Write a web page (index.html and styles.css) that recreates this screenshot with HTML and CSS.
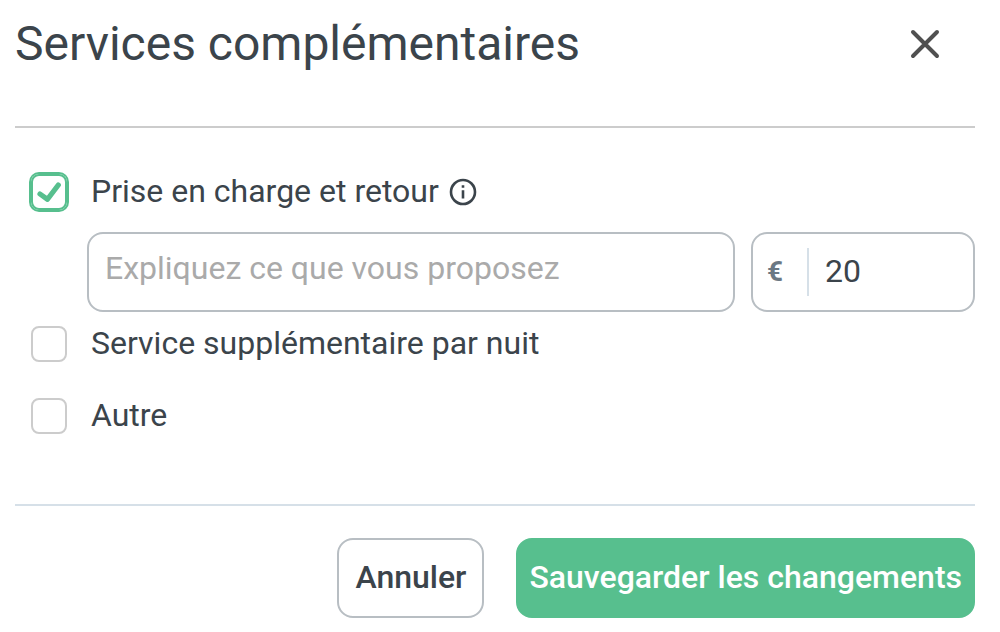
FILE: index.html
```html
<!DOCTYPE html>
<html lang="fr">
<head>
  <meta charset="UTF-8">
  <title>Services complémentaires</title>
  <meta name="viewport" content="width=device-width, initial-scale=1.0">
  <link rel="stylesheet" href="styles.css">
</head>
<body>

  <form class="services">
    <header class="services-header">
      <h1>Services complémentaires</h1>
      <button type="button" class="close" aria-label="Fermer">
        <svg width="32" height="32" viewBox="0 0 32 32" fill="none" stroke="#505050" stroke-width="4" stroke-linecap="round">
          <path d="M4 4L28 28M28 4L4 28"/>
        </svg>
      </button>
    </header>

    <div class="services-list">
      <div class="service">
        <input type="checkbox" id="pickup" checked>
        <label for="pickup">Prise en charge et retour</label>
        <svg class="info" width="28" height="28" viewBox="0 0 28 28">
          <circle cx="14" cy="14" r="12" fill="none" stroke="#3b444b" stroke-width="2.6"/>
          <path d="M12.7 7.2h2.6v2.5h-2.6zM12.7 12.2h2.6v8.4h-2.6z" fill="#3b444b"/>
        </svg>
      </div>

      <div class="service-details">
        <input type="text" class="description" placeholder="Expliquez ce que vous proposez" aria-label="Description du service">
        <div class="price">
          <label for="pickup-price">€</label>
          <input type="text" id="pickup-price" inputmode="numeric" value="20">
        </div>
      </div>

      <div class="service">
        <input type="checkbox" id="night">
        <label for="night">Service supplémentaire par nuit</label>
      </div>

      <div class="service">
        <input type="checkbox" id="other">
        <label for="other">Autre</label>
      </div>
    </div>

    <footer class="services-footer">
      <button type="button" class="btn">Annuler</button>
      <button type="submit" class="btn btn-primary">Sauvegarder les changements</button>
    </footer>
  </form>

</body>
</html>
```
FILE: styles.css
```css
* {
  box-sizing: border-box;
}

body {
  margin: 0;
  font-family: Roboto, "Liberation Sans", sans-serif;
  font-size: 32px;
  line-height: 40px;
  color: #3b444b;
  background: #fff;
}

input,
button {
  font: inherit;
  color: inherit;
}

.services {
  padding: 16px 25px 14px 15px;
}

.services-header {
  display: flex;
  justify-content: space-between;
  align-items: center;
  padding: 0 34px 54px 0;
  border-bottom: 2px solid #ccc;
}

h1 {
  margin: 0;
  font-size: 48px;
  line-height: 56px;
  font-weight: 400;
}

.close {
  display: flex;
  padding: 0;
  border: none;
  background: none;
  cursor: pointer;
}

.services-list {
  padding: 44px 0 68px;
}

.service {
  display: flex;
  align-items: center;
  padding-left: 16px;
}

.service + .service {
  margin-top: 32px;
}

.service label {
  padding-bottom: 2px;
  line-height: 38px;
}

.service input {
  appearance: none;
  width: 36px;
  height: 36px;
  margin: 0 24px 0 0;
  border: 2px solid #ccc;
  border-radius: 8px;
  background: #fff;
}

.service input:checked {
  border-color: #57bf8e;
  box-shadow: 0 0 0 2px #57bf8e;
  background: url("data:image/svg+xml,%3Csvg xmlns='http://www.w3.org/2000/svg' viewBox='0 0 32 32' fill='none' stroke='%2357bf8e' stroke-width='5.2' stroke-linecap='round' stroke-linejoin='round'%3E%3Cpath d='M7 18L14.5 23.3L25.3 9'/%3E%3C/svg%3E") center / 32px no-repeat;
}

.info {
  margin-left: 10px;
}

.service-details {
  display: flex;
  gap: 16px;
  margin: 20px 0 12px;
  padding-left: 72px;
}

.description,
.price {
  height: 80px;
  border: 2px solid #b8bec3;
  border-radius: 16px;
  background: #fff;
}

.description {
  flex: 1;
  min-width: 0;
  padding: 0 16px 8px;
}

.description::placeholder {
  color: #aaa;
  opacity: 1;
}

.price {
  display: flex;
  align-items: center;
  width: 224px;
  padding: 0 14px;
}

.price label {
  width: 40px;
  font-size: 28px;
  font-weight: 700;
  color: #6b7883;
}

.price input {
  flex: 1;
  min-width: 0;
  height: 48px;
  padding: 0 0 2px 16px;
  border: none;
  border-left: 2px solid #d6e0e8;
  background: none;
}

.services-footer {
  display: flex;
  justify-content: flex-end;
  gap: 32px;
  padding-top: 32px;
  border-top: 2px solid #d6e0e8;
}

.btn {
  height: 80px;
  padding: 0 16px 2px;
  border: 2px solid #b8bec3;
  border-radius: 16px;
  font-weight: 500;
  background: #fff;
  cursor: pointer;
}

.btn-primary {
  padding: 0 11px 2px;
  border-color: #57bf8e;
  color: #fff;
  background: #57bf8e;
}
```
